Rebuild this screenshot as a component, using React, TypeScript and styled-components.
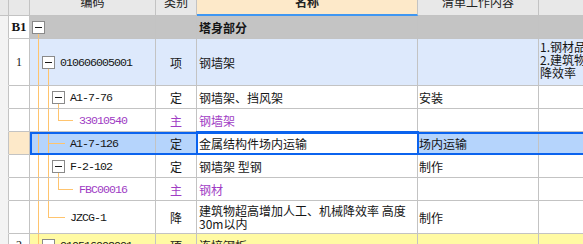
import styled, { createGlobalStyle } from "styled-components";

const GlobalStyle = createGlobalStyle`
    html, body {
        margin: 0;
        padding: 0;
        background: #ffffff;
        overflow: hidden;
    }
    body {
        font-family: "Noto Sans CJK SC", "Noto Sans", sans-serif;
        font-size: 12px;
        color: #151515;
    }
`;

const LINE = "#c3c3c3";
const ORANGE = "#ffc46e";
const BLUE = "#0b63ee";

const W = { strip: 9, num: 21, code: 126, type: 41, name: 221, work: 121, note: 200 };

type TreeSpec = { w: number; guides: number[]; box?: number; branch?: { x: number; to: number } };

type RowData = {
    h: number;
    num?: string;
    bg?: string;
    tree: TreeSpec;
    code: string;
    type: string;
    name: string;
    work?: string;
    note?: string[];
    purple?: boolean;
    selected?: boolean;
};

const QUOTA: TreeSpec = { w: 40, guides: [8, 18], box: 22 };
const MAIN: TreeSpec = { w: 49, guides: [8, 18], branch: { x: 28, to: 43 } };

const rows: RowData[] = [
    {
        h: 47,
        num: "1",
        bg: "#dde9fc",
        tree: { w: 30, guides: [8], box: 12 },
        code: "010606005001",
        type: "项",
        name: "钢墙架",
        note: ["1.钢材品种、规格", "2.建筑物超高增加人工、机械", "降效率"],
    },
    { h: 23, tree: QUOTA, code: "A1-7-76", type: "定", name: "钢墙架、挡风架", work: "安装" },
    { h: 23, tree: MAIN, code: "33010540", type: "主", name: "钢墙架", purple: true },
    {
        h: 23,
        tree: { w: 40, guides: [8, 18], branch: { x: 18, to: 35 } },
        code: "A1-7-126",
        type: "定",
        name: "金属结构件场内运输",
        work: "场内运输",
        selected: true,
    },
    { h: 23, tree: QUOTA, code: "F-2-102", type: "定", name: "钢墙架 型钢", work: "制作" },
    { h: 23, tree: MAIN, code: "FBC00016", type: "主", name: "钢材", purple: true },
    {
        h: 33,
        tree: { w: 40, guides: [8], branch: { x: 18, to: 35 } },
        code: "JZCG-1",
        type: "降",
        name: "建筑物超高增加人工、机械降效率 高度30m以内",
        work: "制作",
    },
    {
        h: 23,
        num: "2",
        bg: "#fffaa3",
        tree: { w: 30, guides: [8], box: 12 },
        code: "010516002001",
        type: "项",
        name: "连接钢板",
    },
];

const Tree = ({ spec, h }: { spec: TreeSpec; h: number }) => {
    const mid = Math.floor(h / 2);
    const by = Math.round((h - 12) / 2);
    const b = spec.branch;
    return (
        <TreeSvg width={spec.w} height={h}>
            <g stroke={ORANGE} strokeWidth={1}>
                {spec.guides.map((x) => (
                    <line key={x} x1={x + 0.5} y1={0} x2={x + 0.5} y2={h} />
                ))}
                {b && (
                    <>
                        <line x1={b.x + 0.5} y1={0} x2={b.x + 0.5} y2={mid + 1} />
                        <line x1={b.x} y1={mid + 0.5} x2={b.to} y2={mid + 0.5} />
                    </>
                )}
                {spec.box !== undefined && (
                    <line x1={spec.box + 6.5} y1={by + 12} x2={spec.box + 6.5} y2={h} />
                )}
            </g>
            {spec.box !== undefined && (
                <>
                    <rect x={spec.box + 0.5} y={by + 0.5} width={12} height={12} fill="#ffffff" stroke="#8a8a8a" />
                    <line x1={spec.box + 3} y1={by + 6.5} x2={spec.box + 10} y2={by + 6.5} stroke="#1a1a1a" />
                </>
            )}
        </TreeSvg>
    );
};

const App = () => {
    return (
        <>
            <GlobalStyle />
            <Sheet>
                <Row $h={16}>
                    <StripCell $head />
                    <NumCell $bg="#e8e8e8" />
                    <HeadCell $w={W.code}>
                        <HeadLabel>编码</HeadLabel>
                    </HeadCell>
                    <HeadCell $w={W.type}>
                        <HeadLabel>类别</HeadLabel>
                    </HeadCell>
                    <HeadCell $w={W.name} $active>
                        <HeadLabel $bold>名称</HeadLabel>
                    </HeadCell>
                    <HeadCell $w={W.work}>
                        <HeadLabel>清单工作内容</HeadLabel>
                    </HeadCell>
                    <HeadCell $w={W.note} />
                </Row>

                <Row $h={23}>
                    <StripCell />
                    <NumCell>
                        <SectionNo>B1</SectionNo>
                    </NumCell>
                    <DataGroup $bg="#c4c4c4">
                        <CodeCell>
                            <Tree spec={{ w: 20, guides: [], box: 2 }} h={22} />
                        </CodeCell>
                        <TypeCell />
                        <NameCell>
                            <SectionTitle>塔身部分</SectionTitle>
                        </NameCell>
                        <WorkCell />
                        <NoteCell />
                    </DataGroup>
                </Row>

                {rows.map((r) => (
                    <Row $h={r.h} key={r.code}>
                        <StripCell />
                        <NumCell $bg={r.selected ? "#fde9c9" : "#ffffff"}>
                            <RowNo>{r.num}</RowNo>
                        </NumCell>
                        <DataGroup $bg={r.selected ? "#b5d4fc" : r.bg || "#ffffff"} $selected={r.selected}>
                            <CodeCell>
                                <Tree spec={r.tree} h={r.h - 1} />
                                <Code $purple={r.purple}>{r.code}</Code>
                            </CodeCell>
                            <TypeCell $purple={r.purple}>{r.type}</TypeCell>
                            <NameCell $purple={r.purple} $editing={r.selected} $wrap={r.h > 30}>
                                {r.name}
                            </NameCell>
                            <WorkCell>{r.work}</WorkCell>
                            <NoteCell>
                                {r.note && (
                                    <NoteText>
                                        {r.note.map((n) => (
                                            <NoteLine key={n}>{n}</NoteLine>
                                        ))}
                                    </NoteText>
                                )}
                            </NoteCell>
                        </DataGroup>
                    </Row>
                ))}
            </Sheet>
        </>
    );
};

const Sheet = styled.div`
    display: flex;
    flex-direction: column;
    width: max-content;
`;

const Row = styled.div<{ $h: number }>`
    display: flex;
    height: ${(p) => p.$h}px;
    flex: none;
`;

const Cell = styled.div`
    flex: none;
    box-sizing: border-box;
    height: 100%;
    border-right: 1px solid ${LINE};
    border-bottom: 1px solid ${LINE};
    display: flex;
    align-items: center;
    overflow: hidden;
    white-space: nowrap;
`;

const StripCell = styled(Cell)<{ $head?: boolean }>`
    width: ${W.strip}px;
    background: ${(p) => (p.$head ? "#e8e8e8" : "#f3f3f3")};
    border-bottom-color: ${(p) => (p.$head ? LINE : "#f3f3f3")};
`;

const NumCell = styled(Cell)<{ $bg?: string }>`
    width: ${W.num}px;
    background: ${(p) => p.$bg || "#ffffff"};
    justify-content: center;
`;

const RowNo = styled.span`
    font-family: "Liberation Serif", serif;
    font-size: 12px;
`;

const SectionNo = styled.span`
    font-family: "Liberation Serif", serif;
    font-weight: 700;
    font-size: 13px;
`;

const HeadCell = styled(Cell)<{ $w: number; $active?: boolean }>`
    width: ${(p) => p.$w}px;
    background: ${(p) => (p.$active ? "#fde9c9" : "#e8e8e8")};
    justify-content: center;
    align-items: flex-start;
    border-bottom: ${(p) => (p.$active ? `2px solid #3f97f2` : `1px solid ${LINE}`)};
`;

const HeadLabel = styled.span<{ $bold?: boolean }>`
    line-height: 12px;
    margin-top: -4px;
    font-size: 12px;
    color: #222;
    font-weight: ${(p) => (p.$bold ? 700 : 400)};
`;

const DataGroup = styled.div<{ $bg: string; $selected?: boolean }>`
    display: flex;
    height: 100%;
    background: ${(p) => p.$bg};
    outline: ${(p) => (p.$selected ? `2px solid ${BLUE}` : "none")};
    outline-offset: -2px;
`;

const CodeCell = styled(Cell)`
    width: ${W.code}px;
    align-items: stretch;
`;

const TreeSvg = styled.svg`
    flex: none;
    display: block;
    shape-rendering: crispEdges;
`;

const Code = styled.span<{ $purple?: boolean }>`
    align-self: center;
    font-family: "Liberation Mono", monospace;
    font-size: 11.6px;
    letter-spacing: -0.95px;
    color: ${(p) => (p.$purple ? "#a03cc4" : "#151515")};
`;

const TypeCell = styled(Cell)<{ $purple?: boolean }>`
    width: ${W.type}px;
    justify-content: center;
    color: ${(p) => (p.$purple ? "#a03cc4" : "#151515")};
`;

const NameCell = styled(Cell)<{ $purple?: boolean; $editing?: boolean; $wrap?: boolean }>`
    width: ${W.name}px;
    padding-left: 2px;
    color: ${(p) => (p.$purple ? "#a03cc4" : "#151515")};
    white-space: ${(p) => (p.$wrap ? "normal" : "nowrap")};
    line-height: 13px;
    background: ${(p) => (p.$editing ? "#ffffff" : "transparent")};
    outline: ${(p) => (p.$editing ? `2px solid ${BLUE}` : "none")};
    outline-offset: -1px;
`;

const SectionTitle = styled.span`
    font-weight: 700;
`;

const WorkCell = styled(Cell)`
    width: ${W.work}px;
    padding-left: 1px;
`;

const NoteCell = styled(Cell)`
    width: ${W.note}px;
    padding-left: 1px;
`;

const NoteText = styled.div`
    display: flex;
    flex-direction: column;
    margin-bottom: 5px;
`;

const NoteLine = styled.div`
    line-height: 13px;
`;

export default App;
